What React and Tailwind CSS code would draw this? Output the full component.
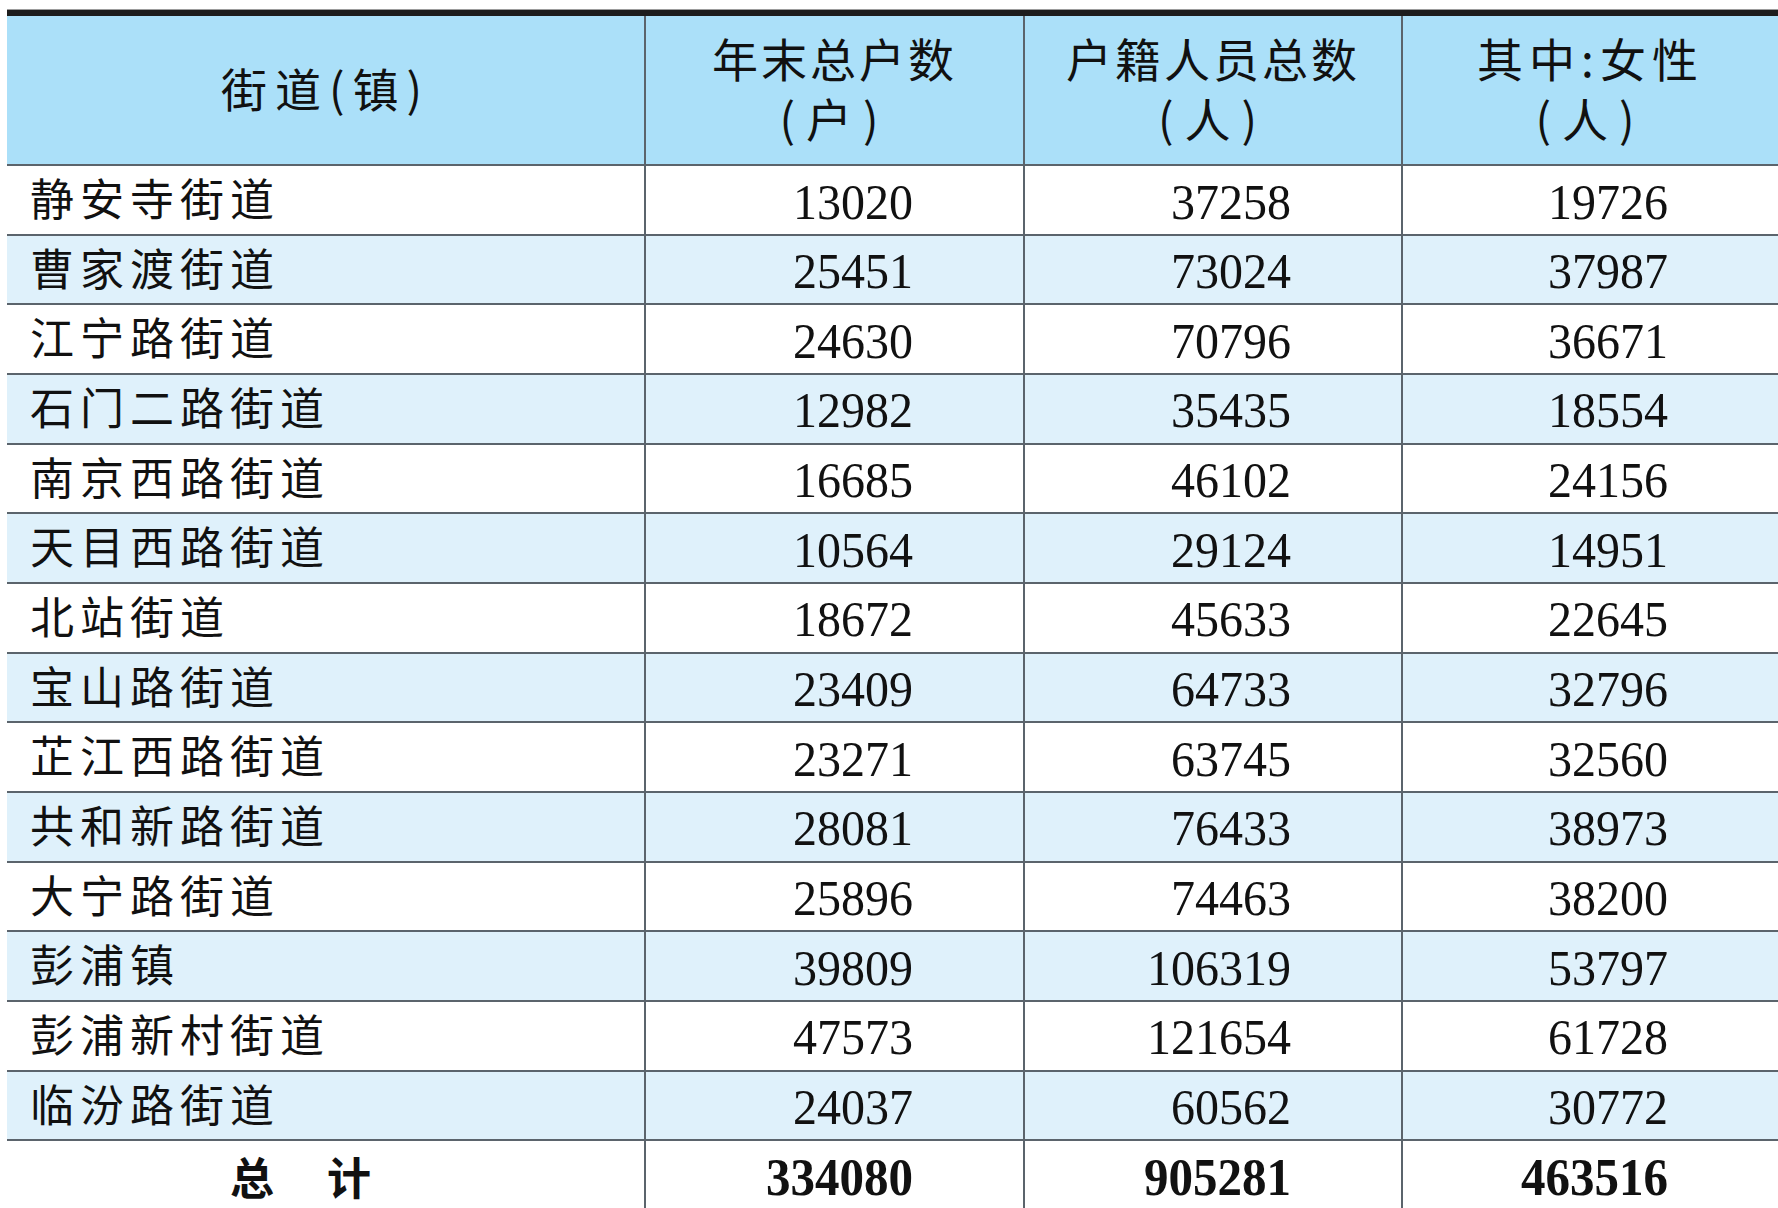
import React from 'react'

const rows = [
    ['静安寺街道', '13020', '37258', '19726'],
    ['曹家渡街道', '25451', '73024', '37987'],
    ['江宁路街道', '24630', '70796', '36671'],
    ['石门二路街道', '12982', '35435', '18554'],
    ['南京西路街道', '16685', '46102', '24156'],
    ['天目西路街道', '10564', '29124', '14951'],
    ['北站街道', '18672', '45633', '22645'],
    ['宝山路街道', '23409', '64733', '32796'],
    ['芷江西路街道', '23271', '63745', '32560'],
    ['共和新路街道', '28081', '76433', '38973'],
    ['大宁路街道', '25896', '74463', '38200'],
    ['彭浦镇', '39809', '106319', '53797'],
    ['彭浦新村街道', '47573', '121654', '61728'],
    ['临汾路街道', '24037', '60562', '30772'],
]

const grid = 'grid grid-cols-[637px_379px_378px_1fr]'
const line = 'border-[#5b646c]'

function HeadCell({ first, children }) {
    return (
        <div className={`flex flex-col items-center justify-center pb-[6px] text-[46px] leading-[60px] tracking-[3px] text-[#111] font-['Noto_Sans_CJK_SC',sans-serif] ${first ? '' : `border-l-2 ${line}`}`}>
            {children}
        </div>
    )
}

function NumCell({ value, bold }) {
    return (
        <div className={`flex items-center justify-end pr-[110px] pt-[2px] border-l-2 ${line}`}>
            <span className={`inline-block font-['Liberation_Serif',serif] text-[#111] leading-none ${bold ? 'text-[49px] font-bold scale-y-[1.08]' : 'text-[48px] scale-y-[1.07]'}`}>
                {value}
            </span>
        </div>
    )
}

export default function App() {
    return (
        <div className="h-screen overflow-hidden bg-white pt-[9px] pl-[7px]">
            {/* top rule */}
            <div className="h-[7px] border-t border-[#9c9c9c] bg-[#1d1d1d]" />

            {/* header */}
            <div className={`${grid} h-[150px] bg-[#abe0f9] border-b-2 ${line}`}>
                <HeadCell first>
                    <span className="tracking-[8px]">街道(镇)</span>
                </HeadCell>
                <HeadCell>
                    <span>年末总户数</span>
                    <span className="tracking-[11px]">(户)</span>
                </HeadCell>
                <HeadCell>
                    <span>户籍人员总数</span>
                    <span className="tracking-[11px]">(人)</span>
                </HeadCell>
                <HeadCell>
                    <span className="tracking-[6px]">其中:女性</span>
                    <span className="tracking-[11px]">(人)</span>
                </HeadCell>
            </div>

            {/* body */}
            {rows.map((r, i) => (
                <div key={r[0]} className={`${grid} h-[69.67px] border-b-2 ${line} ${i % 2 ? 'bg-[#dff1fb]' : 'bg-white'}`}>
                    <div className="flex items-center pl-[23px] pt-[3px] text-[44px] tracking-[6px] text-[#111] font-['Liberation_Serif','Noto_Sans_CJK_SC',serif]">
                        {r[0]}
                    </div>
                    <NumCell value={r[1]} />
                    <NumCell value={r[2]} />
                    <NumCell value={r[3]} />
                </div>
            ))}

            {/* total */}
            <div className={`${grid} h-[70px] bg-white`}>
                <div className="flex items-center pl-[223px] text-[44px] font-bold text-[#111] font-['Noto_Sans_CJK_SC',sans-serif]">
                    <span>总</span>
                    <span className="ml-[53px]">计</span>
                </div>
                <NumCell value="334080" bold />
                <NumCell value="905281" bold />
                <NumCell value="463516" bold />
            </div>
        </div>
    )
}
